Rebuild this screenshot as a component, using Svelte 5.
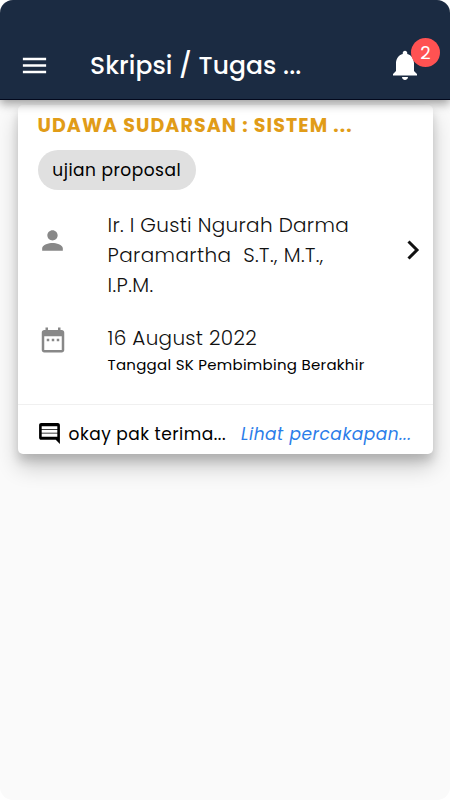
<script lang="ts">
	let unread = $state(2);

	const thesis = {
		title: 'UDAWA SUDARSAN : SISTEM ...',
		stage: 'ujian proposal',
		lecturer: ['Ir. I Gusti Ngurah Darma', 'Paramartha  S.T., M.T.,', 'I.P.M.'],
		date: '16 August 2022',
		dateLabel: 'Tanggal SK Pembimbing Berakhir',
		lastMessage: 'okay pak terima...'
	};
</script>

<div class="screen">
	<header>
		<button class="menu" aria-label="Menu">
			<svg viewBox="0 0 24 24" width="31" height="31"><path d="M3 18h18v-2H3v2zm0-5h18v-2H3v2zm0-7v2h18V6H3z" /></svg>
		</button>
		<h1>Skripsi / Tugas ...</h1>
		<button class="bell" aria-label="Notifikasi">
			<svg viewBox="0 0 24 24" width="36" height="36"><path d="M12 22c1.1 0 2-.9 2-2h-4c0 1.1.9 2 2 2zm6-6v-5c0-3.07-1.64-5.64-4.5-6.32V4c0-.83-.67-1.5-1.5-1.5s-1.5.67-1.5 1.5v.68C7.63 5.36 6 7.92 6 11v5l-2 2v1h16v-1l-2-2z" /></svg>
			{#if unread > 0}
				<span class="badge">{unread}</span>
			{/if}
		</button>
	</header>

	<article class="card">
		<div class="top">
			<h2>{thesis.title}</h2>
			<span class="chip"><span>{thesis.stage}</span></span>
		</div>

		<div class="row person">
			<svg class="icon" viewBox="0 0 24 24" width="31" height="31"><path d="M12 12c2.21 0 4-1.79 4-4s-1.79-4-4-4-4 1.79-4 4 1.79 4 4 4zm0 2c-2.67 0-8 1.34-8 4v2h16v-2c0-2.66-5.33-4-8-4z" /></svg>
			<div class="name">
				{#each thesis.lecturer as line, i}
					<div class="line" class:degrees={i > 0}>{line}</div>
				{/each}
			</div>
			<svg class="chevron" viewBox="0 0 14 22" width="14" height="22"><path d="M2.5 2.5 11 11l-8.5 8.5" /></svg>
		</div>

		<div class="row date">
			<svg class="icon" viewBox="0 0 24 24" width="30" height="30"><path d="M9 11H7v2h2v-2zm4 0h-2v2h2v-2zm4 0h-2v2h2v-2zm2-7h-1V2h-2v2H8V2H6v2H5c-1.11 0-1.99.9-1.99 2L3 20c0 1.1.89 2 2 2h14c1.1 0 2-.9 2-2V6c0-1.1-.9-2-2-2zm0 16H5V9h14v11z" /></svg>
			<div>
				<div class="day">{thesis.date}</div>
				<div class="label">{thesis.dateLabel}</div>
			</div>
		</div>

		<footer>
			<svg viewBox="0 0 24 24" width="25" height="25"><path d="M21.99 4c0-1.1-.89-2-1.99-2H4c-1.1 0-2 .9-2 2v12c0 1.1.9 2 2 2h14l4 4-.01-18zM19.5 15h-15v-3h15v3zm0-3.7h-15V8.7h15v2.6zm0-3.3h-15V5h15v3z" /></svg>
			<span class="message">{thesis.lastMessage}</span>
			<a href="#chat">Lihat percakapan...</a>
		</footer>
	</article>
</div>

<style>
	:global(body) {
		background: #fff;
	}

	.screen {
		height: 800px;
		overflow: hidden;
		border-radius: 13px;
		background: #fafafa;
		color: #111;
		font-family: Poppins, Inter, sans-serif;
	}

	header {
		position: relative;
		z-index: 1;
		display: flex;
		align-items: center;
		box-sizing: border-box;
		height: 100px;
		padding: 30px 27px 0 19.5px;
		background: #1b2b42;
		border-bottom: 1px solid #03091d;
		box-shadow: 0 4px 9px rgba(0, 0, 0, 0.36);
		color: #fff;
	}

	svg {
		display: block;
		flex: none;
		fill: currentColor;
	}

	button {
		padding: 0;
		border: 0;
		background: none;
		color: inherit;
		font: inherit;
	}

	.menu {
		margin: 1px 0 0 -0.5px;
	}

	h1 {
		flex: 1;
		margin: 2px 0 0 40px;
		font-size: 25px;
		font-weight: 500;
		line-height: 36px;
		letter-spacing: 0.07px;
		white-space: nowrap;
	}

	.bell {
		position: relative;
	}

	.badge {
		position: absolute;
		top: -9px;
		left: 24px;
		width: 29px;
		height: 29px;
		border-radius: 50%;
		background: #ff5252;
		font-size: 18px;
		line-height: 29px;
		text-align: center;
	}

	.card {
		height: 349px;
		margin: 5px 17px 0 17.5px;
		border-radius: 5px;
		background: #fff;
		box-shadow: 0 13px 22px rgba(0, 0, 0, 0.2), 0 7px 10px rgba(0, 0, 0, 0.14);
	}

	.top {
		padding: 6px 20px 0;
	}

	h2 {
		margin: 0;
		font-size: 19px;
		font-weight: 700;
		line-height: 30px;
		letter-spacing: 1.08px;
		white-space: nowrap;
		color: #e19c18;
	}

	.chip {
		display: flex;
		align-items: center;
		justify-content: center;
		width: 158.5px;
		height: 40px;
		margin-top: 9px;
		border-radius: 20px;
		background: #e0e0e0;
		color: #000;
		font-size: 17px;
		letter-spacing: 0.5px;
	}

	.row {
		display: flex;
		padding-left: 19.5px;
	}

	.row .icon {
		margin-right: 39.5px;
		color: #888;
	}

	.person {
		padding-top: 20px;
	}

	.person .icon {
		margin-top: 14.5px;
	}

	.name {
		width: 298px;
		font-size: 20px;
		font-weight: 300;
		line-height: 30px;
		letter-spacing: 0.3px;
	}

	.line {
		white-space: pre;
	}

	.degrees {
		letter-spacing: 0.4px;
	}

	.chevron {
		margin-top: 29px;
		fill: none;
		stroke: #111;
		stroke-width: 3;
	}

	.date {
		padding-top: 23px;
	}

	.date .icon {
		margin: 2px 40px 0 0.5px;
	}

	.day {
		font-size: 20px;
		font-weight: 300;
		line-height: 30px;
		letter-spacing: 0.3px;
	}

	.label {
		color: #000;
		font-size: 15px;
		line-height: 23px;
		letter-spacing: 0.27px;
		white-space: nowrap;
	}

	footer {
		display: flex;
		align-items: center;
		box-sizing: border-box;
		height: 50px;
		margin-top: 28px;
		padding: 8px 20px 0 19.5px;
		border-top: 1px solid #f0f0f0;
		color: #000;
		font-size: 17px;
		white-space: nowrap;
	}

	.message {
		width: 172.5px;
		margin-left: 6.5px;
		letter-spacing: 0.5px;
	}

	a {
		color: #2b7de9;
		font-style: italic;
		letter-spacing: 0.55px;
		text-decoration: none;
	}
</style>
